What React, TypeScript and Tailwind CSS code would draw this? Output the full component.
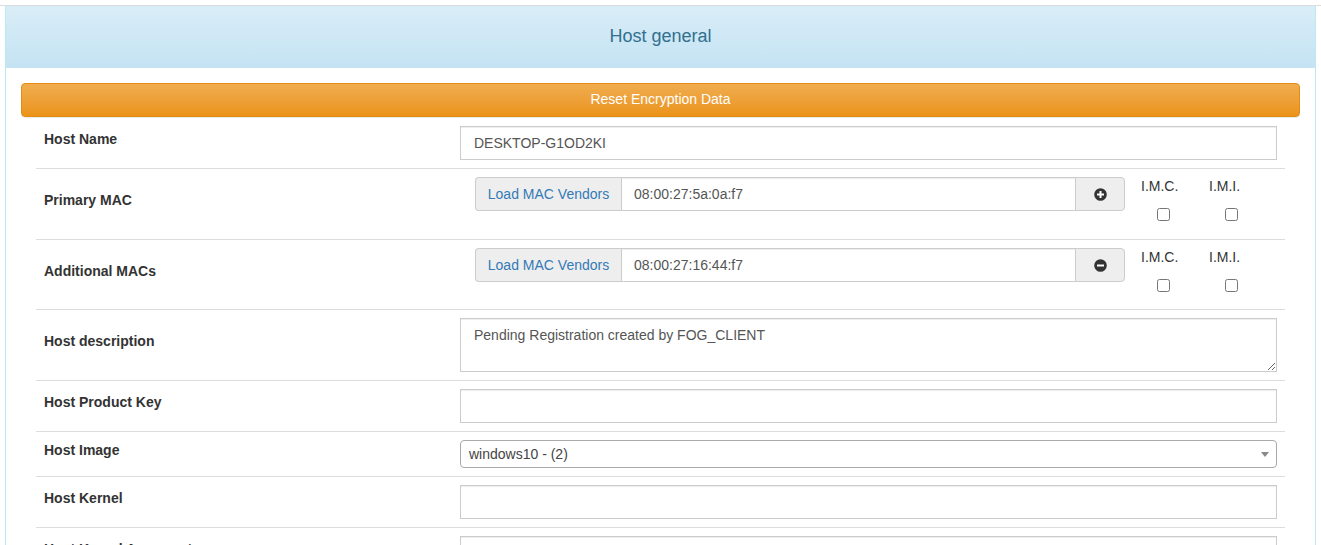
import { useState } from "react";

const inputCls =
  "block w-full h-[34px] border border-[#ccc] bg-white px-[13px] text-[14px] text-[#555] shadow-[inset_0_1px_1px_rgba(0,0,0,0.075)] outline-none";

function Row({ label, children }: { label: string; children: React.ReactNode }) {
  return (
    <div className="grid grid-cols-[416px_1fr] border-b border-[#ddd]">
      <div className="flex items-center px-2">
        <span className="mb-[8px] text-[14px] font-bold leading-5 text-[#333]">{label}</span>
      </div>
      <div className="py-2 px-2">{children}</div>
    </div>
  );
}

function CircleIcon({ minus }: { minus?: boolean }) {
  return (
    <svg width="13" height="13" viewBox="0 0 13 13">
      <circle cx="6.5" cy="6.5" r="6.3" fill="#333" />
      <rect x="3" y="5.5" width="7" height="2" fill="#fff" />
      {!minus && <rect x="5.5" y="3" width="2" height="7" fill="#fff" />}
    </svg>
  );
}

function MacField({ value, minus }: { value: string; minus?: boolean }) {
  return (
    <div className="flex items-start">
      <div className="ml-[15px] flex h-[34px] w-[650px]">
        <div className="flex w-[146px] items-center justify-center rounded-l-[4px] border border-r-0 border-[#ccc] bg-[#eee] text-[14px] text-[#337ab7]">
          Load MAC Vendors
        </div>
        <input
          className="h-[34px] flex-1 border border-[#ccc] bg-white px-[12px] text-[14px] text-[#555] shadow-[inset_0_1px_1px_rgba(0,0,0,0.075)] outline-none"
          defaultValue={value}
        />
        <button
          type="button"
          className="-ml-px flex w-[50px] items-center justify-center rounded-r-[4px] border border-[#ccc] bg-[#eee]"
        >
          <CircleIcon minus={minus} />
        </button>
      </div>
      <div className="ml-[16px] flex gap-[24px]">
        {["I.M.C.", "I.M.I."].map((t) => (
          <div key={t} className="flex w-[44px] flex-col">
            <span className="-mt-px text-[14px] leading-5 text-[#333]">{t}</span>
            <div className={minus ? "mt-[12px] mb-[9px] flex justify-center" : "mt-[12px] mb-[10px] flex justify-center"}>
              <input type="checkbox" className="h-[13px] w-[13px]" />
            </div>
          </div>
        ))}
      </div>
    </div>
  );
}

export default function App() {
  const [desc, setDesc] = useState("Pending Registration created by FOG_CLIENT");

  return (
    <div className="h-screen overflow-hidden bg-white font-['Liberation_Sans',Arial,sans-serif]">
      <div className="h-[6px] border-b border-[#dcdcdc]" />
      <div className="ml-[5px] w-[1311px] border-x border-[#bce8f1]">
        <div className="flex h-[62px] items-center justify-center bg-gradient-to-b from-[#d9edf7] to-[#c4e3f3] pb-[2px]">
          <h3 className="text-[18px] leading-5 text-[#31708f]">Host general</h3>
        </div>
        <div className="px-[15px] pt-[15px]">
          <button
            type="button"
            className="mb-px block h-[34px] w-full rounded-[4px] border border-[#e38d13] bg-gradient-to-b from-[#f0ad4e] to-[#eb9316] pb-[2px] text-[14px] text-white shadow-[0_1px_0_rgba(0,0,0,0.08)]"
          >
            Reset Encryption Data
          </button>
          <div className="px-[15px]">
            <Row label="Host Name">
              <input className={inputCls} defaultValue="DESKTOP-G1OD2KI" />
            </Row>
            <Row label="Primary MAC">
              <MacField value="08:00:27:5a:0a:f7" />
            </Row>
            <Row label="Additional MACs">
              <MacField value="08:00:27:16:44:f7" minus />
            </Row>
            <Row label="Host description">
              <textarea
                className="block h-[54px] w-full border border-[#ccc] bg-white px-[13px] py-[6px] text-[14px] leading-5 text-[#555] shadow-[inset_0_1px_1px_rgba(0,0,0,0.075)] outline-none"
                value={desc}
                onChange={(e) => setDesc(e.target.value)}
              />
            </Row>
            <Row label="Host Product Key">
              <input className={inputCls} />
            </Row>
            <Row label="Host Image">
              <div className="flex h-[28px] items-center justify-between rounded-[4px] border border-[#aaa] bg-white pl-[8px] pr-[7px] text-[14px] text-[#444]">
                <span>windows10 - (2)</span>
                <span className="h-0 w-0 border-x-[4px] border-t-[5px] border-x-transparent border-t-[#888]" />
              </div>
            </Row>
            <Row label="Host Kernel">
              <input className={inputCls} />
            </Row>
            <Row label="Host Kernel Arguments">
              <input className={inputCls} />
            </Row>
            <Row label="Host Primary Disk">
              <input className={inputCls} />
            </Row>
          </div>
        </div>
      </div>
    </div>
  );
}
